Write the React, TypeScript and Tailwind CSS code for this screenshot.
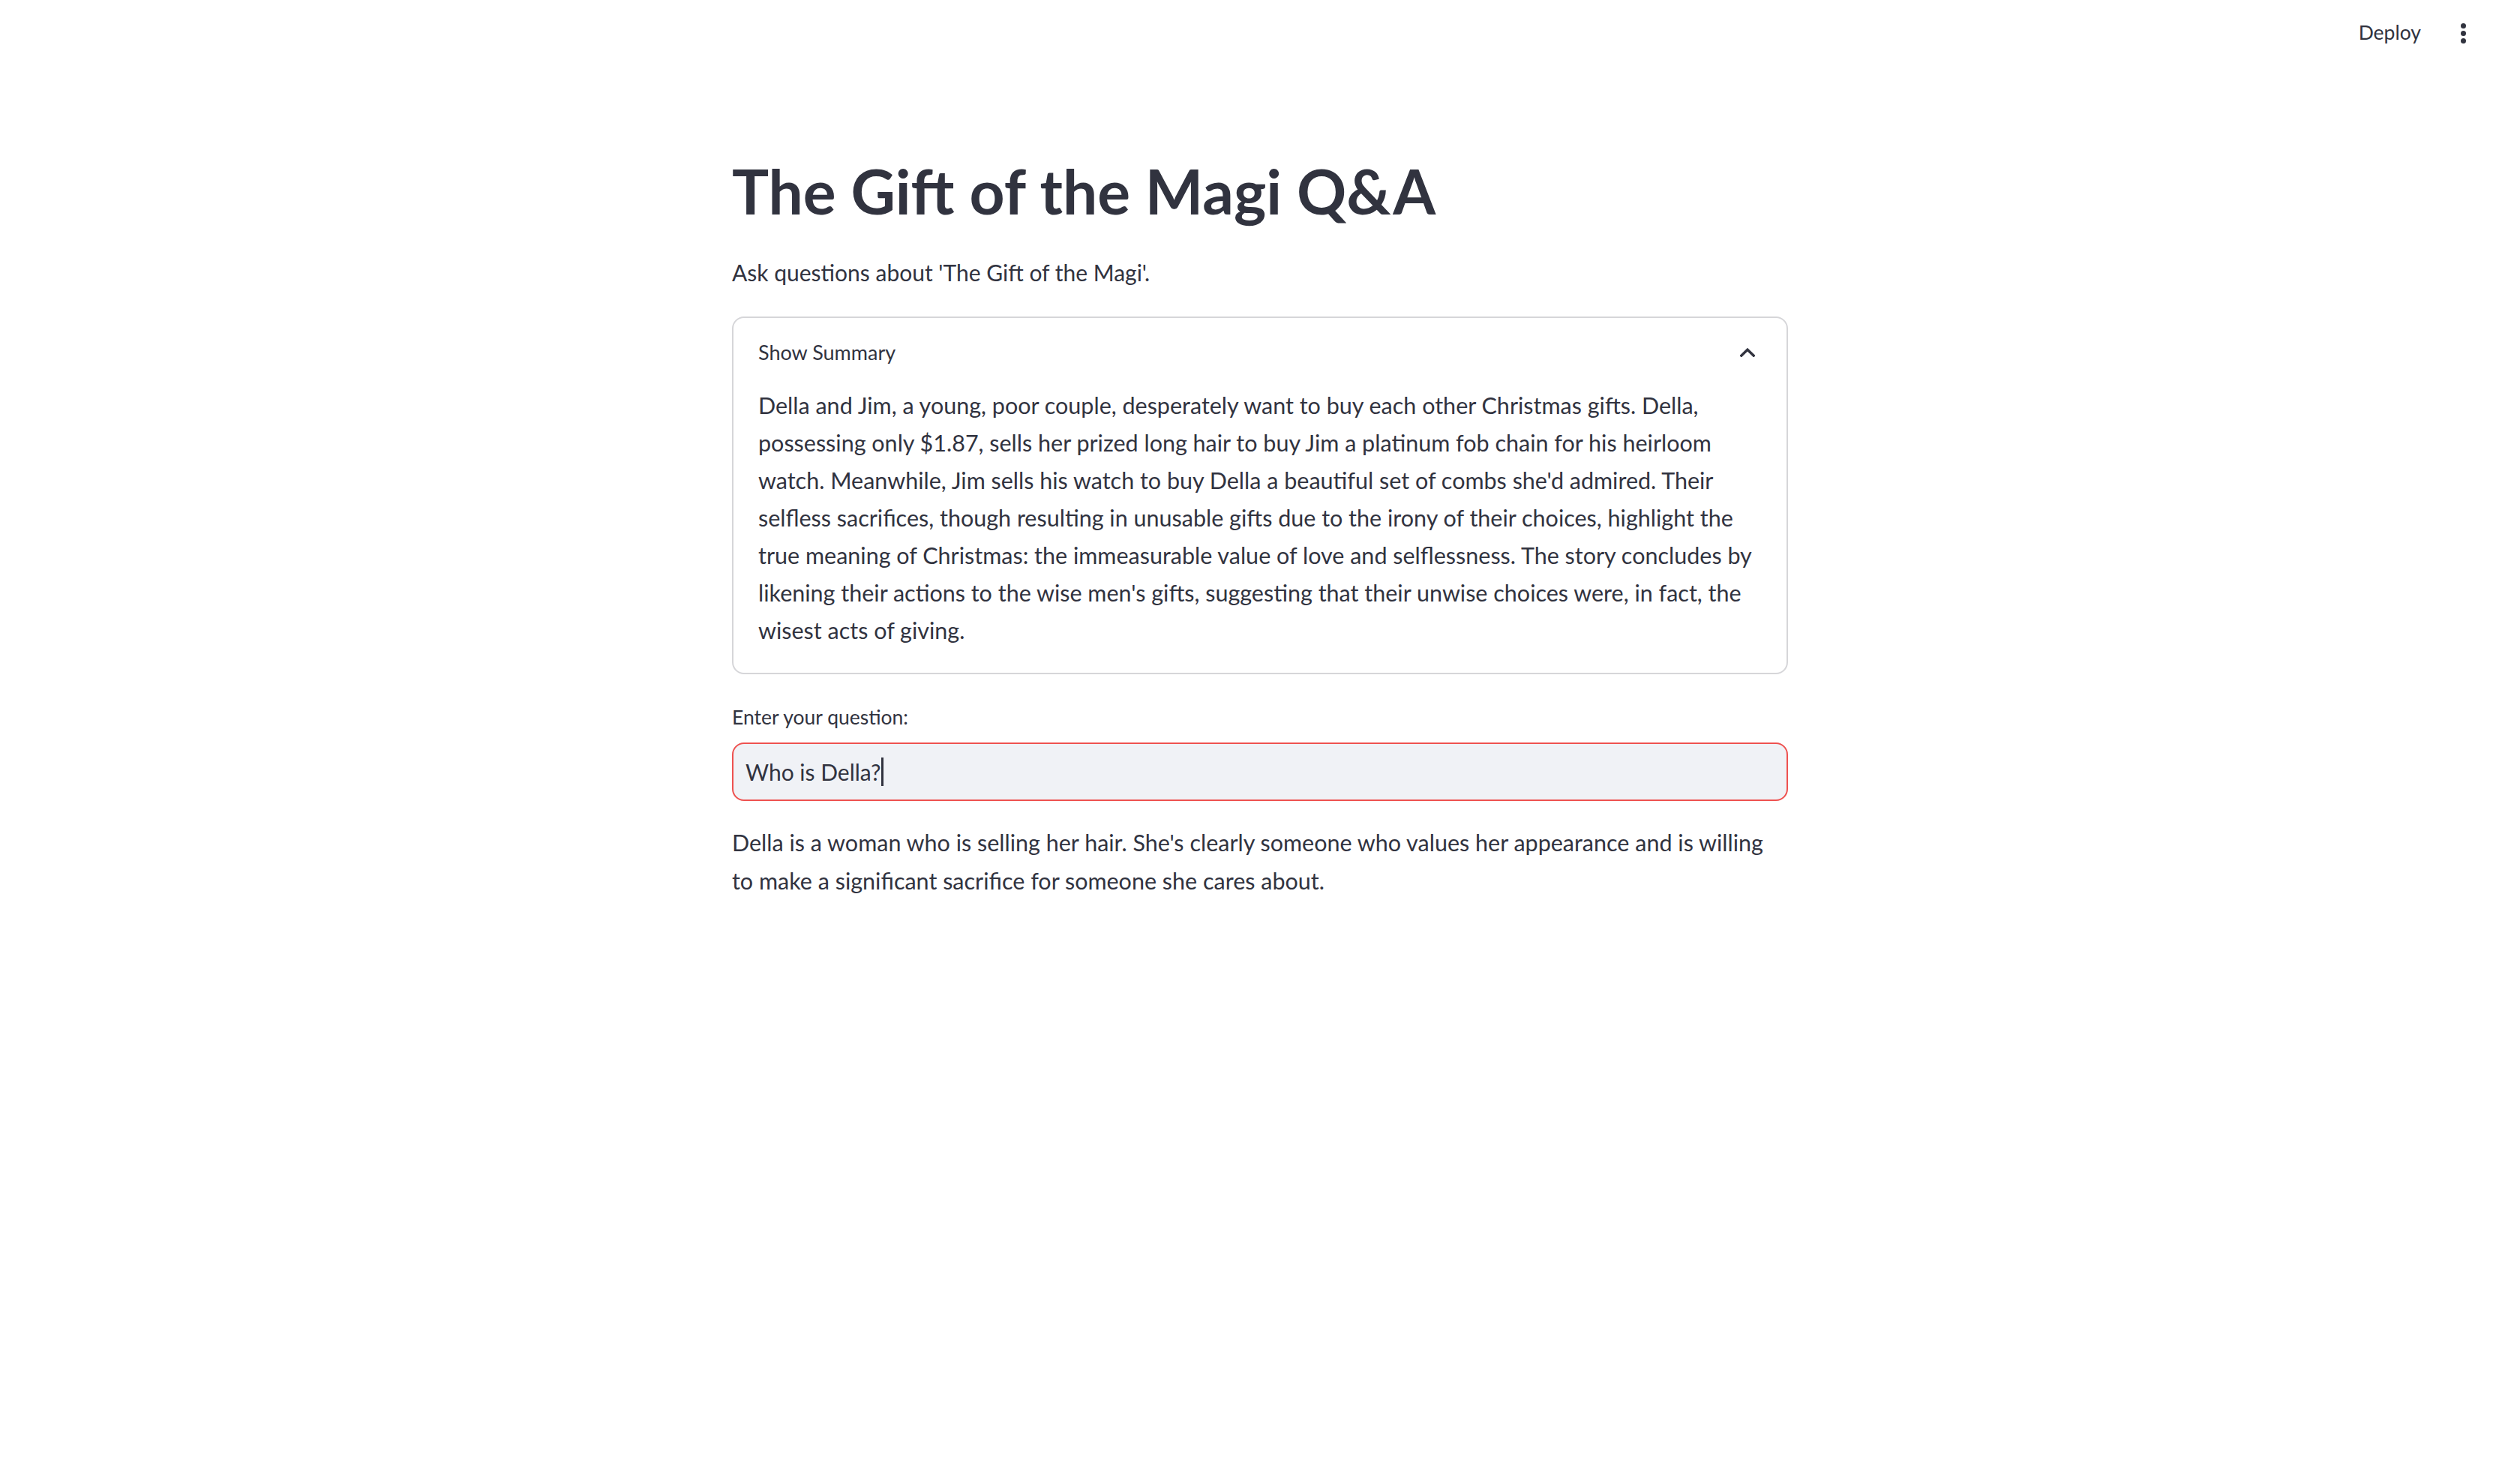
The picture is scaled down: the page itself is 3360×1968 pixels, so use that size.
import React from "react";

const summaryLines = [
  "Della and Jim, a young, poor couple, desperately want to buy each other Christmas gifts. Della,",
  "possessing only $1.87, sells her prized long hair to buy Jim a platinum fob chain for his heirloom",
  "watch. Meanwhile, Jim sells his watch to buy Della a beautiful set of combs she'd admired. Their",
  "selfless sacrifices, though resulting in unusable gifts due to the irony of their choices, highlight the",
  "true meaning of Christmas: the immeasurable value of love and selflessness. The story concludes by",
  "likening their actions to the wise men's gifts, suggesting that their unwise choices were, in fact, the",
  "wisest acts of giving.",
];

const answerLines = [
  "Della is a woman who is selling her hair. She's clearly someone who values her appearance and is willing",
  "to make a significant sacrifice for someone she cares about.",
];

export default function App() {
  return (
    <div className="min-h-[1968px] w-full bg-white text-[#31333F] [font-family:Lato,sans-serif]">
      <div className="flex h-[88px] items-center justify-end pr-[72px]">
        <span className="text-[26.5px] leading-[1.2]">Deploy</span>
        <div className="ml-[53px] flex flex-col items-center gap-[3px]">
          <span className="block h-[7px] w-[7px] rounded-full bg-[#31333F]" />
          <span className="block h-[7px] w-[7px] rounded-full bg-[#31333F]" />
          <span className="block h-[7px] w-[7px] rounded-full bg-[#31333F]" />
        </div>
      </div>

      <main className="mx-auto w-[1408px]">
        <h1 className="mt-[117px] whitespace-nowrap text-[82px] font-bold leading-[1.2]">
          The Gift of the Magi Q&amp;A
        </h1>
        <p className="mt-[35px] text-[30px] leading-[51px]">
          Ask questions about 'The Gift of the Magi'.
        </p>

        <div className="mt-[33px] rounded-[16px] border-2 border-[#d6d6d9]">
          <div className="flex items-center justify-between pl-[33px] pr-[42px] pt-[23px]">
            <span className="text-[27px] leading-[45px]">Show Summary</span>
            <svg width="20" height="12" viewBox="0 0 20 12" fill="none">
              <polyline
                points="1.8,10.2 10,2.2 18.2,10.2"
                stroke="#31333F"
                strokeWidth="3.4"
                strokeLinecap="square"
                strokeLinejoin="miter"
              />
            </svg>
          </div>
          <div className="px-[33px] pb-[32px] pt-[23px] text-[30.5px] leading-[50px]">
            {summaryLines.map((l, i) => (
              <div key={i} className="whitespace-nowrap">
                {l}
              </div>
            ))}
          </div>
        </div>

        <div className="mt-[35px] text-[26.5px] leading-[45px]">Enter your question:</div>
        <div className="mt-[11px] flex h-[78px] items-center rounded-[16px] border-2 border-[#ee5250] bg-[#f0f2f6] pl-[16px]">
          <span className="text-[30px] leading-[1.2]">Who is Della?</span>
          <span className="ml-[1px] block h-[38px] w-[3px] bg-[#31333F]" />
        </div>

        <div className="mt-[30px] text-[30.5px] leading-[51px]">
          {answerLines.map((l, i) => (
            <div key={i} className="whitespace-nowrap">
              {l}
            </div>
          ))}
        </div>
      </main>
    </div>
  );
}
